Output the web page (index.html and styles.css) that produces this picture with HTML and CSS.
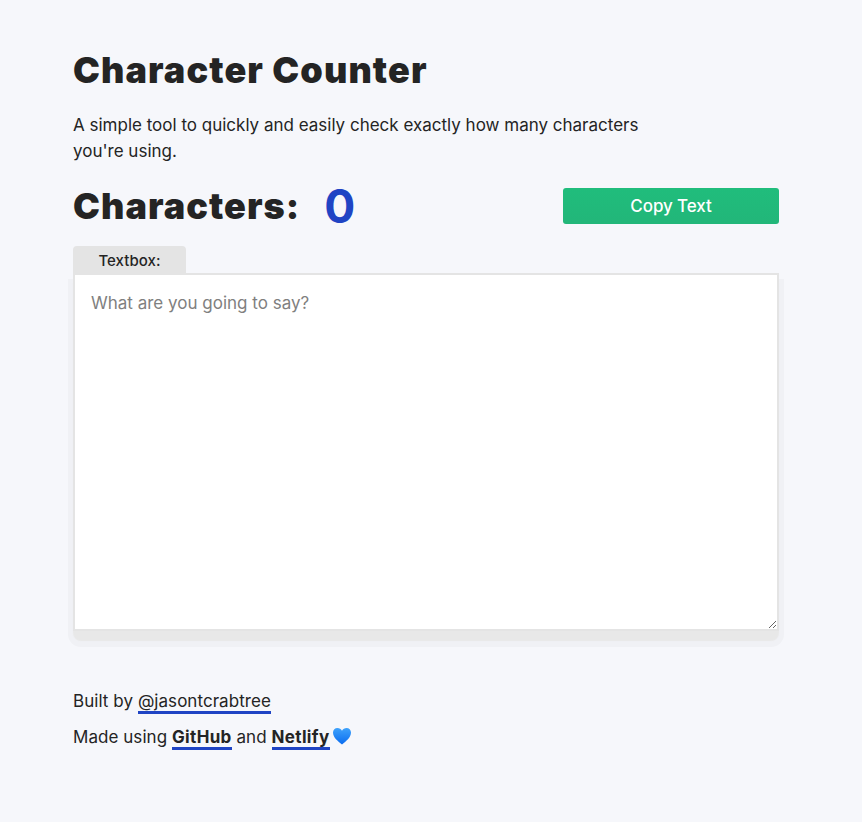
FILE: index.html
```html
<!DOCTYPE html>
<html lang="en">
<head>
  <meta charset="UTF-8" />
  <title>Character Counter</title>
  <link rel="stylesheet" href="styles.css">
</head>
<body>
  <main class="page">
    <h1 class="title">Character Counter</h1>
    <p class="intro">A simple tool to quickly and easily check exactly how many characters you're using.</p>

    <div class="count-row">
      <h2 class="count">Characters: <span class="count-value">0</span></h2>
      <button class="copy-btn">Copy Text</button>
    </div>

    <label class="tab" for="textbox">Textbox:</label>
    <div class="box-shadow">
      <textarea class="textbox" id="textbox" placeholder="What are you going to say?"></textarea>
    </div>

    <footer class="footer">
      <p>Built by <a href="#">@jasontcrabtree</a></p>
      <p>Made using <a href="#"><strong>GitHub</strong></a> and <a href="#"><strong>Netlify</strong></a>
        <svg class="heart" viewBox="0 0 20 18" width="20" height="18" aria-label="blue heart">
          <defs>
            <linearGradient id="heartFill" x1="0" y1="0" x2="0" y2="1">
              <stop offset="0" stop-color="#3ea2fb"/>
              <stop offset="1" stop-color="#0a6cf0"/>
            </linearGradient>
          </defs>
          <path d="M10 17.5C6 14.4 1 10.6 1 5.6 1 2.9 3 1 5.4 1 7.4 1 9 2 10 3.8 11 2 12.6 1 14.6 1 17 1 19 2.9 19 5.6 19 10.6 14 14.4 10 17.5Z" fill="url(#heartFill)"/>
        </svg>
      </p>
    </footer>
  </main>
</body>
</html>
```

FILE: styles.css
```css
* {
  box-sizing: border-box;
}

body {
  margin: 0;
  background-color: #f6f7fb;
  color: #242424;
  font-family: Inter, "Liberation Sans", sans-serif;
  font-size: 17px;
  letter-spacing: 0.05px;
}

.page {
  width: 706px;
  margin-left: 73px;
  padding-top: 48px;
  padding-bottom: 56px;
}

.title {
  margin: 0;
  font-size: 36px;
  line-height: 44px;
  font-weight: 900;
  letter-spacing: 1.1px;
}

.intro {
  width: 575px;
  margin: 20px 0 0;
  line-height: 26px;
  letter-spacing: 0;
}

/* count and copy button */
.count-row {
  display: flex;
  justify-content: space-between;
  align-items: center;
  height: 60px;
  margin-top: 12px;
}

.count {
  display: flex;
  align-items: center;
  gap: 16px;
  margin: 0;
  font-size: 36px;
  line-height: 44px;
  font-weight: 900;
  letter-spacing: 1.05px;
}

.count-value {
  margin-left: 8px;
  font-size: 46px;
  line-height: 44px;
  font-weight: 700;
  letter-spacing: 0;
  color: #1f44c4;
}

.copy-btn {
  width: 216px;
  height: 36px;
  border: none;
  border-radius: 3px;
  background-image: linear-gradient(#20bd7c, #22b679);
  color: #fff;
  font-family: inherit;
  font-size: 17px;
  font-weight: 500;
  letter-spacing: -0.1px;
}

/* textbox */
.tab {
  display: block;
  width: 113px;
  height: 28px;
  margin-top: 10px;
  padding-top: 5px;
  border-radius: 4px 4px 0 0;
  background-color: #e4e4e4;
  font-size: 15px;
  font-weight: 500;
  line-height: 20px;
  text-align: center;
}

.box-shadow {
  border-radius: 0 0 8px 8px;
  box-shadow: 0 10px 1px 0 #e8e8e8, 0 11px 0 5px #f0f1f5;
}

.textbox {
  display: block;
  width: 706px;
  height: 358px;
  margin-top: -1px;
  padding: 15px 16px;
  border: 2px solid #e4e4e4;
  border-radius: 0;
  outline: none;
  background-color: #fff;
  color: #242424;
  font-family: inherit;
  font-size: 17px;
  line-height: 26px;
}

.textbox::placeholder {
  color: #808080;
  opacity: 1;
}

/* footer */
.footer {
  margin-top: 57px;
  line-height: 26px;
}

.footer p {
  margin: 0 0 10px;
}

.footer a {
  color: #242424;
  text-decoration: none;
  border-bottom: 3px solid #1f44c4;
}

.footer strong {
  letter-spacing: 0.35px;
}

.heart {
  margin-left: -2px;
  vertical-align: -2px;
}
```
